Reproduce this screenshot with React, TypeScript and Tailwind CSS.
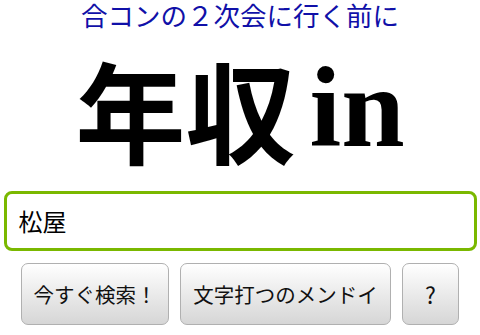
export default function App() {
  return (
    <div className="w-[480px] h-[335px] bg-white overflow-hidden flex flex-col items-center">
      <div className="mt-[1px] text-[26.5px] leading-[27px] text-[#1010a8] font-['Noto_Sans_CJK_JP',sans-serif]">
        合コンの２次会に行く前に
      </div>
      <div className="mt-[20px] h-[120px] flex items-center text-[110px] leading-[120px] font-bold text-black font-['Liberation_Serif','Noto_Sans_CJK_JP',serif]">
        <span className="font-['Noto_Sans_CJK_JP',sans-serif] font-bold">年収</span>
        <span className="ml-[14px] text-[114px]">in</span>
      </div>
      <div className="mt-[23px] w-[473px] h-[60px] border-[3px] border-[#7ab800] rounded-[8px] flex items-center px-[12px] text-[24px] text-black font-['Noto_Sans_CJK_JP',sans-serif]">
        松屋
      </div>
      <div className="mt-[12px] flex gap-[11px] font-['Noto_Sans_CJK_JP',sans-serif] text-[20.5px] text-[#111]">
        <button className="w-[148px] h-[62px] rounded-[7px] border border-[#b0b0b0] bg-gradient-to-b from-white to-[#d6d6d6] whitespace-nowrap">今すぐ検索！</button>
        <button className="w-[211px] h-[62px] rounded-[7px] border border-[#b0b0b0] bg-gradient-to-b from-white to-[#d6d6d6] whitespace-nowrap">文字打つのメンドイ</button>
        <button className="w-[57px] h-[62px] rounded-[7px] border border-[#b0b0b0] bg-gradient-to-b from-white to-[#d6d6d6] text-[23px]">?</button>
      </div>
    </div>
  );
}
